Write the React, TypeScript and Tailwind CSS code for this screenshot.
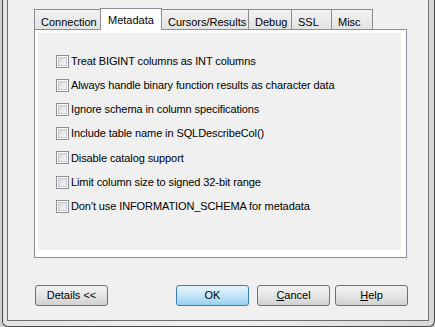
import React from "react";

const font = { fontFamily: '"Liberation Sans", Arial, sans-serif' };

const options = [
  "Treat BIGINT columns as INT columns",
  "Always handle binary function results as character data",
  "Ignore schema in column specifications",
  "Include table name in SQLDescribeCol()",
  "Disable catalog support",
  "Limit column size to signed 32-bit range",
  "Don't use INFORMATION_SCHEMA for metadata",
];

const tabs = [
  { label: "Connection", w: "w-[67px]" },
  { label: "Metadata", w: "w-[62px]", active: true },
  { label: "Cursors/Results", w: "w-[88px]" },
  { label: "Debug", w: "w-[44px]" },
  { label: "SSL", w: "w-[41px]" },
  { label: "Misc", w: "w-[42px]" },
];

const Checkbox = () => (
  <div className="w-[13px] h-[13px] border border-[#8f8f8f] bg-white p-[1px] shrink-0">
    <div className="w-full h-full border border-[#c6c9cf] bg-gradient-to-br from-[#d6d9de] to-[#f7f7f7]" />
  </div>
);

const Button = ({ children, primary, className }: { children: React.ReactNode; primary?: boolean; className?: string }) => (
  <div
    className={
      "w-[73px] h-[21px] rounded-[3px] border flex items-center justify-center text-[11px] text-black " +
      (primary
        ? "border-[#3c7fb1] bg-gradient-to-b from-[#e5f4fc] via-[#c4e5f6] to-[#98d1ef] "
        : "border-[#707070] bg-gradient-to-b from-[#f2f2f2] via-[#e6e6e6] to-[#d0d0d0] ") +
      (className ?? "")
    }
  >
    {children}
  </div>
);

export default function App() {
  return (
    <div className="w-[435px] h-[327px] bg-[#cfcfcf] overflow-hidden" style={font}>
      <div className="ml-[2px] w-[433px] h-[327px] border-x border-b border-[#4a4a4a] rounded-b-[6px] bg-gradient-to-r from-[#e4e4e4] via-[#f2f2f2] to-[#d8d8d8] pl-[4px] pr-[5px] pb-[5px]">
        <div className="h-full border-x border-b border-[#6f6f6f] bg-[#f0f0f0] pt-[8px] pl-[26px]">
          {/* tabs */}
          <div className="flex items-end h-[21px]">
            {tabs.map((t, i) =>
              t.active ? (
                <div
                  key={t.label}
                  className={`${t.w} h-[22px] -mb-px relative z-10 border-x border-t border-[#898c95] bg-white pl-[7px] pt-[3px] text-[11px] text-black ${i ? "-ml-px" : ""}`}
                >
                  {t.label}
                </div>
              ) : (
                <div
                  key={t.label}
                  className={`${t.w} h-[20px] border-x border-t border-[#898c95] bg-gradient-to-b from-[#f2f2f2] to-[#e3e3e3] pl-[6px] pt-[4px] text-[11px] text-black ${i ? "-ml-px" : ""}`}
                >
                  {t.label}
                </div>
              )
            )}
          </div>
          {/* panel */}
          <div className="w-[373px] h-[229px] border border-[#898c95] bg-white pt-[3px] pl-[3px] pr-[5px] pb-[7px]">
            <div className="h-full bg-[#f0f0f0] pl-[18px] pt-[16px] flex flex-col">
              {options.map((o) => (
                <div key={o} className="h-[24.2px] flex items-center gap-[2px] text-[11px] tracking-[-0.1px] text-black">
                  <Checkbox />
                  <span>{o}</span>
                </div>
              ))}
            </div>
          </div>
          {/* buttons */}
          <div className="flex mt-[27px] ml-px">
            <Button>Details &lt;&lt;</Button>
            <Button primary className="ml-[68px]">OK</Button>
            <Button className="ml-[8px]">
              <span><span className="underline">C</span>ancel</span>
            </Button>
            <Button className="ml-[5px]">
              <span><span className="underline">H</span>elp</span>
            </Button>
          </div>
        </div>
      </div>
    </div>
  );
}
